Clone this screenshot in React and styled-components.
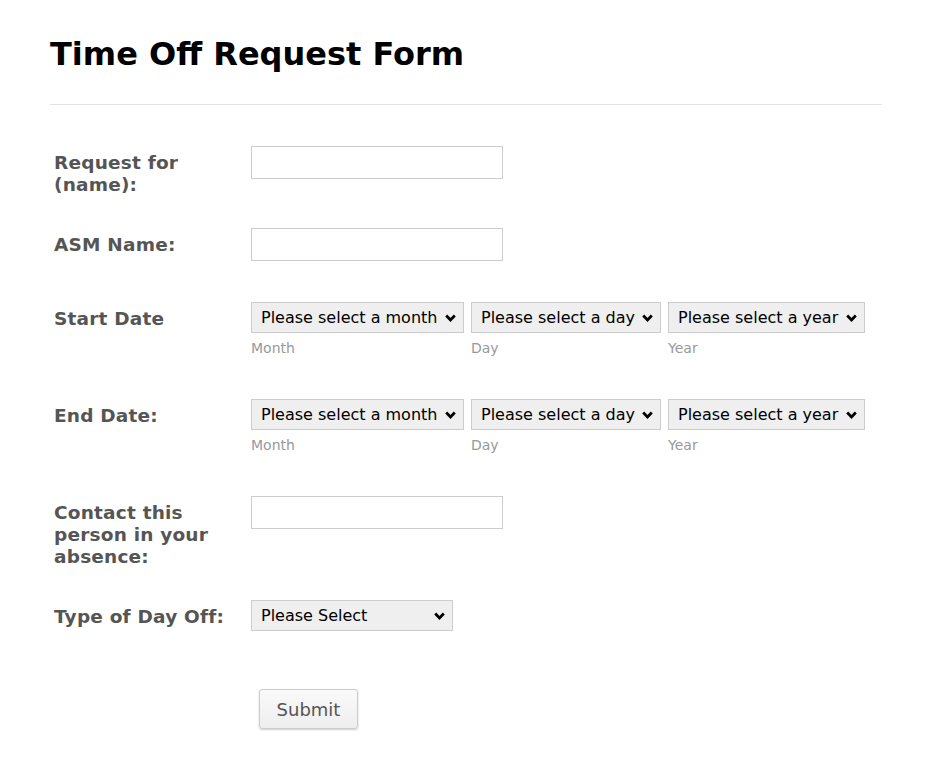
import React from 'react'
import styled, {createGlobalStyle} from 'styled-components'

const GlobalStyle = createGlobalStyle`
body{
    margin: 0;
    background: #fff;
    font-family: "DejaVu Sans", Verdana, sans-serif;
}
`

const chevron = "url(\"data:image/svg+xml,%3Csvg xmlns='http://www.w3.org/2000/svg' width='11' height='8' viewBox='0 0 11 8'%3E%3Cpath d='M1.2 1.6 L5.5 5.9 L9.8 1.6' fill='none' stroke='%23000' stroke-width='2.8'/%3E%3C/svg%3E\")"

const months = ['January','February','March','April','May','June','July','August','September','October','November','December']
const days = Array.from({length: 31}, (_, i) => i + 1)
const years = [2015, 2016, 2017, 2018, 2019, 2020]

const DateField = ()=>{
    return(
        <DateGroup>
            <DatePart>
                <Select>
                    <option>Please select a month</option>
                    {months.map((m)=>(<option key={m}>{m}</option>))}
                </Select>
                <SubLabel>Month</SubLabel>
            </DatePart>
            <DatePart>
                <Select>
                    <option>Please select a day</option>
                    {days.map((d)=>(<option key={d}>{d}</option>))}
                </Select>
                <SubLabel>Day</SubLabel>
            </DatePart>
            <DatePart>
                <Select>
                    <option>Please select a year</option>
                    {years.map((y)=>(<option key={y}>{y}</option>))}
                </Select>
                <SubLabel>Year</SubLabel>
            </DatePart>
        </DateGroup>
    )
}

const App = ()=>{
    return(
        <Page>
            <GlobalStyle/>
            <Title>Time Off Request Form</Title>
            <Divider/>
            <Form onSubmit={(e)=>e.preventDefault()}>
                <Row>
                    <Label>Request for (name):</Label>
                    <Field><TextInput type="text"/></Field>
                </Row>
                <Row>
                    <Label>ASM Name:</Label>
                    <Field><TextInput type="text"/></Field>
                </Row>
                <Row>
                    <Label>Start Date</Label>
                    <Field><DateField/></Field>
                </Row>
                <Row>
                    <Label>End Date:</Label>
                    <Field><DateField/></Field>
                </Row>
                <Row>
                    <Label>Contact this person in your absence:</Label>
                    <Field><TextInput type="text"/></Field>
                </Row>
                <Row>
                    <Label>Type of Day Off:</Label>
                    <Field>
                        <Select $width="202px">
                            <option>Please Select</option>
                            <option>Vacation</option>
                            <option>Sick Day</option>
                            <option>Personal Day</option>
                        </Select>
                    </Field>
                </Row>
                <SubmitRow>
                    <SubmitButton type="submit">Submit</SubmitButton>
                </SubmitRow>
            </Form>
        </Page>
    )
}

const Page = styled.div`
width: 832px;
padding: 35px 0 30px 50px;
`
const Title = styled.h1`
margin: 0;
font-size: 32px;
line-height: 38px;
font-weight: bold;
color: #000;
`
const Divider = styled.div`
height: 1px;
background-color: #e3e3e3;
margin-top: 31px;
`
const Form = styled.form`
display: flex;
flex-direction: column;
padding: 41px 0 0 4px;
`
const Row = styled.div`
display: flex;
align-items: flex-start;
margin-bottom: 32px;
`
const Label = styled.label`
width: 180px;
margin-right: 17px;
padding-top: 6px;
font-size: 18.5px;
letter-spacing: 0.2px;
line-height: 22px;
font-weight: bold;
color: #555;
`
const Field = styled.div`
padding-bottom: 9px;
`
const TextInput = styled.input`
box-sizing: border-box;
width: 252px;
height: 33px;
border: 1px solid #ccc;
background: #fff;
font-family: "DejaVu Sans", sans-serif;
font-size: 16px;
padding: 4px 8px;
outline: none;
`
const Select = styled.select`
box-sizing: border-box;
appearance: none;
height: 31px;
width: ${props => props.$width || 'auto'};
border: 1px solid #ccc;
border-radius: 0;
background-color: #efefef;
background-image: ${chevron};
background-repeat: no-repeat;
background-position: right 7px center;
color: #000;
font-family: "DejaVu Sans", sans-serif;
font-size: 16px;
padding: 0 25px 0 9px;
`
const DateGroup = styled.div`
display: flex;
gap: 7px;
`
const DatePart = styled.div`
display: flex;
flex-direction: column;
`
const SubLabel = styled.span`
margin-top: 6px;
font-size: 14px;
line-height: 19px;
color: #999;
`
const SubmitRow = styled.div`
padding: 17px 0 0 205px;
`
const SubmitButton = styled.button`
width: 99px;
height: 40px;
border: 1px solid #ccc;
border-radius: 3px;
background: linear-gradient(#fafafa, #eeeeee);
box-shadow: 0 1px 2px rgba(0,0,0,0.2);
color: #555;
font-family: "DejaVu Sans", sans-serif;
font-size: 18px;
cursor: pointer;
`

export default App
